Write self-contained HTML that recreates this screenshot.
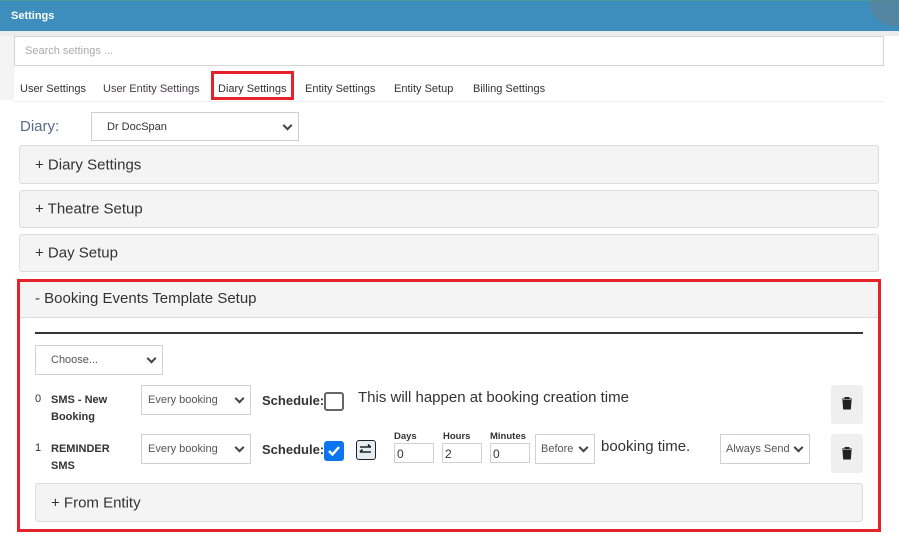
<!DOCTYPE html>
<html><head><style>
*{box-sizing:border-box;margin:0;padding:0}
body{width:899px;height:534px;background:#fff;font-family:"Liberation Sans",sans-serif;color:#333;position:relative;overflow:hidden}
.a{position:absolute}
.hdr{left:0;top:0;width:899px;height:31px;background:#3d8ebd;border-top:1px solid #4a9a9a}
.hdr span{position:absolute;left:11px;top:9px;color:#fff;font-weight:bold;font-size:11px}
.sel{position:absolute;border:1px solid #cfd0d8;background:#fff;font-size:11px;color:#555}
.sel span{position:absolute;top:50%;transform:translateY(-50%)}
.sel i{position:absolute;right:7px;top:50%;width:7px;height:7px;border-right:2px solid #444;border-bottom:2px solid #444;transform:translateY(-70%) rotate(45deg)}
.acc{position:absolute;left:19px;width:860px;background:#f4f4f4;border:1px solid #ddd;border-radius:3px;font-size:15px;color:#333}
.acc span{position:absolute;left:15px;top:50%;transform:translateY(-50%)}
.inp{position:absolute;border:1px solid #cfd0d8;font-size:12px;padding:3px 2px;height:20px}
.lbl{position:absolute;font-size:9.5px;font-weight:bold}
.trash{position:absolute;width:32px;height:39px;background:#efefef;border-radius:3px}
</style></head><body>
<div class="a hdr"><span>Settings</span></div>
<div class="a" style="left:870px;top:-20px;width:50px;height:46px;border-radius:50%;background:#64808f;opacity:.6"></div>
<div class="a" style="left:0;top:31px;width:899px;height:5px;background:#ececec"></div>
<div class="a" style="left:0;top:36px;width:14px;height:64px;background:#f4f4f4"></div>
<div class="a" style="left:14px;top:36px;width:870px;height:30px;border:1px solid #d3d3d9;font-size:11px;color:#aaa;padding:8px 10px">Search settings ...</div>
<div class="a" style="left:14px;top:101px;width:870px;height:1px;background:#eee"></div>
<div class="a" style="top:83px;left:20px;font-size:11px;color:#333;white-space:nowrap">
<span class="a" style="left:0">User Settings</span>
<span class="a" style="left:83px;color:#4a3a4a">User Entity Settings</span>
<span class="a" style="left:198px">Diary Settings</span>
<span class="a" style="left:285px">Entity Settings</span>
<span class="a" style="left:374px">Entity Setup</span>
<span class="a" style="left:453px">Billing Settings</span>
</div>
<div class="a" style="left:211px;top:71px;width:83px;height:29px;border:3px solid #e52229"></div>
<div class="a" style="left:20px;top:118px;font-size:15px;color:#5a6a8a">Diary:</div>
<div class="sel" style="left:91px;top:112px;width:208px;height:29px"><span style="left:15px;color:#333">Dr DocSpan</span><i></i></div>
<div class="acc" style="top:145px;height:39px"><span>+ Diary Settings</span></div>
<div class="acc" style="top:190px;height:38px"><span>+ Theatre Setup</span></div>
<div class="acc" style="top:234px;height:38px"><span>+ Day Setup</span></div>
<div class="a" style="left:17px;top:279px;width:864px;height:253px;border:3px solid #e52229"></div>
<div class="a" style="left:20px;top:282px;width:858px;height:36px;background:#f4f4f4;border-bottom:1px solid #ddd"></div>
<div class="a" style="left:35px;top:290px;font-size:15px">- Booking Events Template Setup</div>
<div class="a" style="left:35px;top:332px;width:828px;height:2px;background:#333"></div>
<div class="sel" style="left:35px;top:345px;width:128px;height:30px"><span style="left:15px">Choose...</span><i></i></div>
<div class="a" style="left:35px;top:393px;font-size:11px">0</div>
<div class="a" style="left:51px;top:392px;font-size:11px;font-weight:bold;line-height:17px">SMS - New<br>Booking</div>
<div class="sel" style="left:141px;top:385px;width:110px;height:30px"><span style="left:6px">Every booking</span><i></i></div>
<div class="a" style="left:262px;top:393px;font-size:13px;font-weight:bold">Schedule:</div>
<div class="a" style="left:324px;top:392px;width:20px;height:19px;border:2px solid #666;border-radius:3px;background:#fff"></div>
<div class="a" style="left:358px;top:389px;font-size:15px">This will happen at booking creation time</div>
<div class="trash" style="left:831px;top:385px"></div>
<div class="a" style="left:35px;top:442px;font-size:11px">1</div>
<div class="a" style="left:51px;top:441px;font-size:11px;font-weight:bold;line-height:17px">REMINDER<br>SMS</div>
<div class="sel" style="left:141px;top:434px;width:110px;height:30px"><span style="left:6px">Every booking</span><i></i></div>
<div class="a" style="left:262px;top:442px;font-size:13px;font-weight:bold">Schedule:</div>
<div class="a" style="left:324px;top:441px;width:20px;height:20px;border-radius:3px;background:#0b75f0"><svg width="20" height="20"><path d="M5 10l3.5 3.5L15 6" stroke="#fff" stroke-width="2.4" fill="none"/></svg></div>
<div class="a" style="left:356px;top:440px;width:20px;height:20px;border:1.5px solid #222;border-radius:3px;background:#e4eef2"><svg width="17" height="17"><path d="M3 6h11M11 3.5l2.5 2.5M14 11H3M5.5 8.5L3 11" stroke="#222" stroke-width="1.6" fill="none"/></svg></div>
<div class="lbl" style="left:394px;top:431px">Days</div>
<div class="lbl" style="left:443px;top:431px">Hours</div>
<div class="lbl" style="left:490px;top:431px">Minutes</div>
<div class="inp" style="left:394px;top:443px;width:40px">0</div>
<div class="inp" style="left:442px;top:443px;width:40px">2</div>
<div class="inp" style="left:490px;top:443px;width:40px">0</div>
<div class="sel" style="left:535px;top:434px;width:60px;height:30px"><span style="left:5px">Before</span><i></i></div>
<div class="a" style="left:601px;top:438px;font-size:15px">booking time.</div>
<div class="sel" style="left:720px;top:434px;width:90px;height:30px"><span style="left:5px">Always Send</span><i></i></div>
<div class="trash" style="left:831px;top:434px"></div>
<svg class="a" style="left:840px;top:396px" width="14" height="14"><path d="M2 3h10M5 3V1.5h4V3M3 4.5h8l-.6 8.5H3.6z" fill="#222" stroke="#222"/></svg>
<svg class="a" style="left:840px;top:446px" width="14" height="14"><path d="M2 3h10M5 3V1.5h4V3M3 4.5h8l-.6 8.5H3.6z" fill="#222" stroke="#222"/></svg>
<div class="acc" style="left:35px;top:483px;width:828px;height:39px"><span>+ From Entity</span></div>
</body></html>
